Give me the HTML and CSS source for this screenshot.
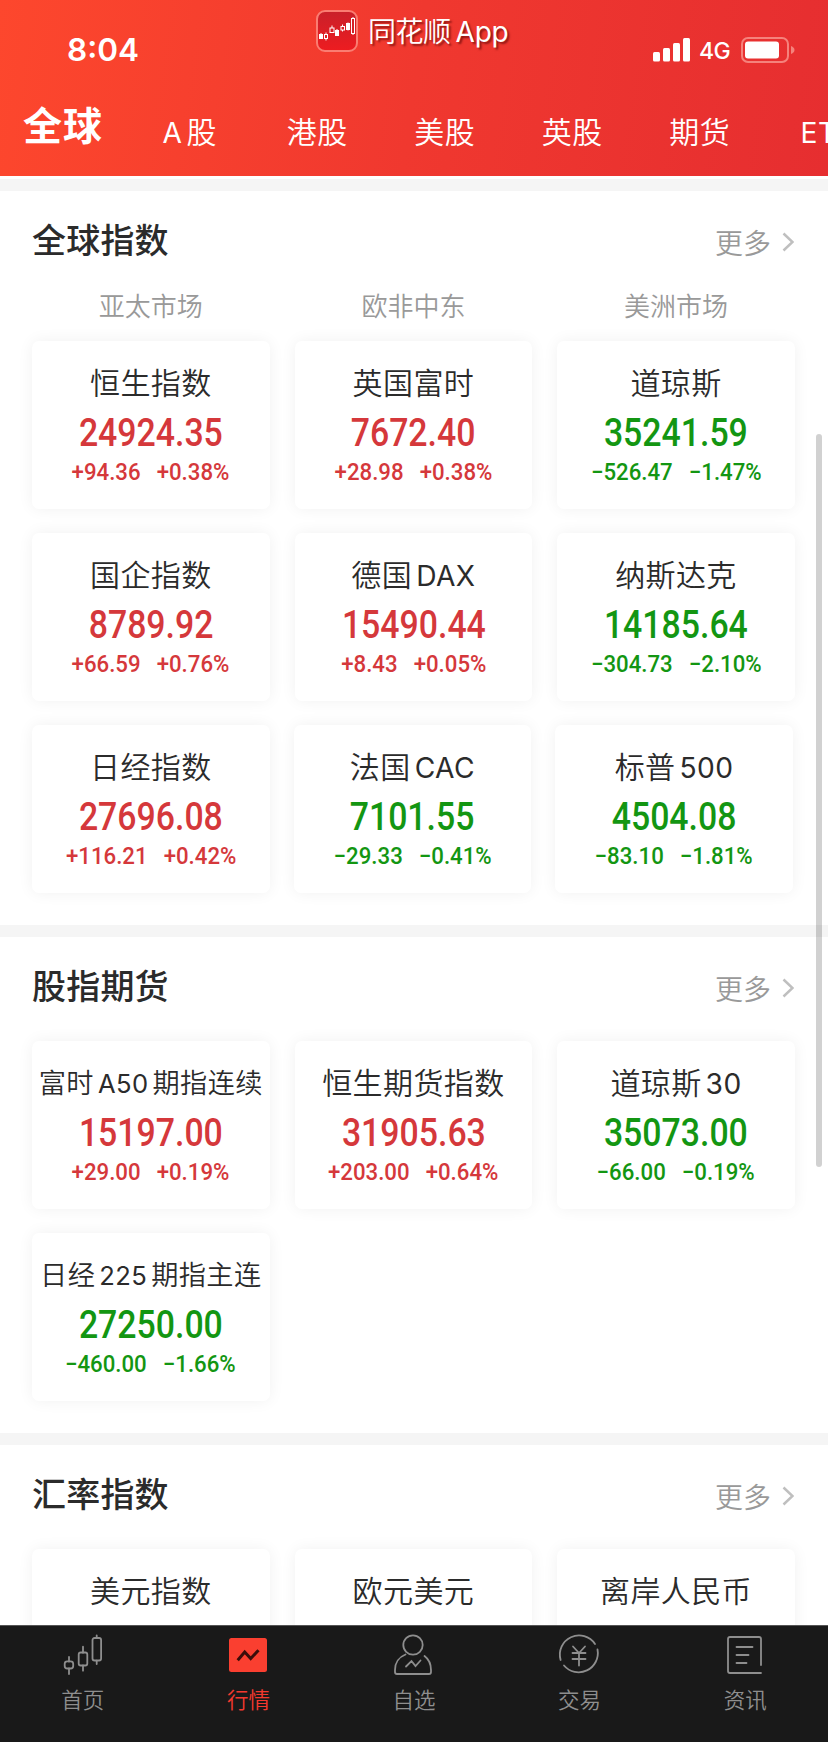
FILE: index.html
```html
<!DOCTYPE html>
<html lang="zh-CN">
<head>
<meta charset="utf-8">
<title>行情</title>
<link rel="stylesheet" href="styles.css">
</head>
<body>
<div class="screen">
  <header class="header">
    <div class="status">
      <span class="clock">8:04</span>
      <div class="brand">
        <svg class="logo" viewBox="0 0 42 42">
          <defs><linearGradient id="lg" x1="0" y1="0" x2="0" y2="1"><stop offset="0" stop-color="#c9202a"/><stop offset="1" stop-color="#ee1c20"/></linearGradient></defs>
          <rect x="1" y="1" width="40" height="40" rx="8" fill="url(#lg)" stroke="#fa7d72" stroke-width="2"/>
          <g stroke="#fff" stroke-width="1" fill="none">
            <path d="M5 23v6M10 22.500v8M16 15.500v7M21 19v7M26.500 14.500v7M32 12.500v8M37 7v18"/>
            <rect x="3.500" y="24.500" width="3" height="4" fill="#fff"/>
            <rect x="8.500" y="24.500" width="3" height="4" fill="#dc1e25"/>
            <rect x="14" y="18" width="4" height="4.500" fill="#dc1e25"/>
            <rect x="19.500" y="20.500" width="3" height="5" fill="#fff"/>
            <rect x="25" y="16.500" width="3.500" height="3.500" fill="#dc1e25"/>
            <rect x="30.500" y="13.500" width="3" height="6" fill="#fff"/>
            <rect x="35.500" y="8.500" width="3" height="15" fill="#d41f27"/>
          </g>
        </svg>
        <span class="brand-name">同花顺<span class="brand-app">App</span></span>
      </div>
      <div class="signals">
        <svg class="bars" viewBox="0 0 38 24"><g fill="#fff"><rect x="0" y="14" width="7" height="9.500" rx="1.500"/><rect x="10" y="10" width="7" height="13.500" rx="1.500"/><rect x="20" y="5" width="7" height="18.500" rx="1.500"/><rect x="30" y="0" width="7" height="23.500" rx="1.500"/></g></svg>
        <span class="net">4G</span>
        <svg class="battery" viewBox="0 0 54 26"><rect x="1" y="1" width="46" height="24" rx="6" fill="none" stroke="#f5827c" stroke-width="2"/><rect x="4" y="4.500" width="34" height="17" rx="3" fill="#fff"/><path d="M50 9q3.500 1.500 3.500 4t-3.500 4z" fill="#f5827c"/></svg>
      </div>
    </div>
    <nav class="tabs">
      <span class="tab tab-active">全球</span>
      <span class="tab"><span class="lat">A</span><i class="sp"></i>股</span>
      <span class="tab">港股</span>
      <span class="tab">美股</span>
      <span class="tab">英股</span>
      <span class="tab">期货</span>
      <span class="tab"><span class="lat">ETF</span></span>
    </nav>
  </header>

  <main class="content">
    <section class="section">
      <div class="head"><h2 class="title">全球指数</h2><span class="more">更多<svg class="chev" viewBox="0 0 12 20"><path d="M1.500 1.500L10.500 10L1.500 18.500"/></svg></span></div>
      <div class="regions"><span>亚太市场</span><span>欧非中东</span><span>美洲市场</span></div>
      <div class="rows">
        <div class="row">
          <div class="card up"><div class="name">恒生指数</div><div class="value">24924.35</div><div class="change"><span>+94.36</span><span>+0.38%</span></div></div>
          <div class="card up"><div class="name">英国富时</div><div class="value">7672.40</div><div class="change"><span>+28.98</span><span>+0.38%</span></div></div>
          <div class="card down"><div class="name">道琼斯</div><div class="value">35241.59</div><div class="change"><span>−526.47</span><span>−1.47%</span></div></div>
        </div>
        <div class="row">
          <div class="card up"><div class="name">国企指数</div><div class="value">8789.92</div><div class="change"><span>+66.59</span><span>+0.76%</span></div></div>
          <div class="card up"><div class="name">德国<i class="sp"></i><span class="lat">DAX</span></div><div class="value">15490.44</div><div class="change"><span>+8.43</span><span>+0.05%</span></div></div>
          <div class="card down"><div class="name">纳斯达克</div><div class="value">14185.64</div><div class="change"><span>−304.73</span><span>−2.10%</span></div></div>
        </div>
        <div class="row row-tight">
          <div class="card up"><div class="name">日经指数</div><div class="value">27696.08</div><div class="change"><span>+116.21</span><span>+0.42%</span></div></div>
          <div class="card down"><div class="name">法国<i class="sp"></i><span class="lat">CAC</span></div><div class="value">7101.55</div><div class="change"><span>−29.33</span><span>−0.41%</span></div></div>
          <div class="card down"><div class="name">标普<i class="sp"></i><span class="lat">500</span></div><div class="value">4504.08</div><div class="change"><span>−83.10</span><span>−1.81%</span></div></div>
        </div>
      </div>
    </section>

    <section class="section">
      <div class="head"><h2 class="title">股指期货</h2><span class="more">更多<svg class="chev" viewBox="0 0 12 20"><path d="M1.500 1.500L10.500 10L1.500 18.500"/></svg></span></div>
      <div class="rows">
        <div class="row">
          <div class="card up"><div class="name name-long">富时<i class="sp"></i><span class="lat">A50</span><i class="sp"></i>期指连续</div><div class="value">15197.00</div><div class="change"><span>+29.00</span><span>+0.19%</span></div></div>
          <div class="card up"><div class="name">恒生期货指数</div><div class="value">31905.63</div><div class="change"><span>+203.00</span><span>+0.64%</span></div></div>
          <div class="card down"><div class="name">道琼斯<i class="sp"></i><span class="lat">30</span></div><div class="value">35073.00</div><div class="change"><span>−66.00</span><span>−0.19%</span></div></div>
        </div>
        <div class="row">
          <div class="card down"><div class="name name-long">日经<i class="sp"></i><span class="lat">225</span><i class="sp"></i>期指主连</div><div class="value">27250.00</div><div class="change"><span>−460.00</span><span>−1.66%</span></div></div>
        </div>
      </div>
    </section>

    <section class="section">
      <div class="head"><h2 class="title">汇率指数</h2><span class="more">更多<svg class="chev" viewBox="0 0 12 20"><path d="M1.500 1.500L10.500 10L1.500 18.500"/></svg></span></div>
      <div class="rows">
        <div class="row">
          <div class="card"><div class="name">美元指数</div></div>
          <div class="card"><div class="name">欧元美元</div></div>
          <div class="card"><div class="name">离岸人民币</div></div>
        </div>
      </div>
    </section>
  </main>

  <nav class="tabbar">
    <div class="item">
      <svg class="icon" viewBox="0 0 48 44"><path d="M10 25v4.500M10 36.500V42M24 14.700v6M24 33.500v5.200M37.700 3.300V6M37.700 28.700V32"/><rect x="5.700" y="29.300" width="8.500" height="7.200" rx="2.500"/><rect x="19.700" y="20.500" width="8.600" height="13" rx="2"/><rect x="33.500" y="6" width="8.600" height="22.500" rx="2"/></svg>
      <span>首页</span>
    </div>
    <div class="item item-active">
      <svg class="icon" viewBox="0 0 48 44"><rect class="fill" x="5" y="6" width="38" height="34" rx="2.500"/><path class="dark" d="M13.700 28.300L20.700 20L26.700 26.500L34.500 18.300"/></svg>
      <span>行情</span>
    </div>
    <div class="item">
      <svg class="icon" viewBox="0 0 48 44"><circle cx="23" cy="13" r="9.700"/><path d="M15.500 22.500C9 25 5 31 5 38v2q0 2 2 2h32q2 0 2-2v-2c0-6-2.500-11-6.500-14"/><path d="M16 34.500l5.500-5.500l4 5l5-5.500"/></svg>
      <span>自选</span>
    </div>
    <div class="item">
      <svg class="icon" viewBox="0 0 48 44"><path d="M39 12A19.200 19.200 0 0 0 4.600 28M8 33.500A19.200 19.200 0 0 0 41.500 17.500"/><path d="M17 14.500l6 6.500l6-6.500M23 21V33.500M16.500 21h13M16.500 27h13"/></svg>
      <span>交易</span>
    </div>
    <div class="item">
      <svg class="icon" viewBox="0 0 48 44"><path d="M40 33V7q0-2-2-2H9Q7 5 7 7v32q0 2 2 2h31"/><path d="M15.500 15h16M15.500 23h12M15.500 31h10"/></svg>
      <span>资讯</span>
    </div>
  </nav>
  <div class="scrollbar"></div>
</div>
</body>
</html>
```
FILE: styles.css
```css
* { box-sizing: border-box; }
body {
  margin: 0;
  font-family: Inter, "Noto Sans CJK SC", sans-serif;
  color: #2b2b2b;
  background: #fff;
}
.screen {
  position: relative;
  width: 828px;
  height: 1742px;
  overflow: hidden;
  display: flex;
  flex-direction: column;
}
.header {
  flex: none;
  height: 176px;
  color: #fff;
  background: linear-gradient(98deg, #fd472d 0%, #f0382f 50%, #e62e30 100%);
}
.status {
  height: 88px;
  display: grid;
  grid-template-columns: 316px 337px 1fr;
}
.clock {
  padding: 30px 0 0 67px;
  font-size: 31.500px;
  line-height: 40px;
  font-weight: 600;
}
.brand {
  display: flex;
  gap: 10px;
  padding-top: 10px;
}
.logo { width: 42px; height: 42px; flex: none; }
.brand-name {
  font-size: 28px;
  line-height: 44px;
  letter-spacing: -0.500px;
  font-weight: 350;
  text-shadow: 2px 2px 2px rgba(80, 0, 0, 0.600);
}
.brand-app { margin-left: 5px; letter-spacing: -0.200px; font-weight: 400; }
.signals { display: flex; padding-top: 37px; }
.bars { width: 38px; height: 24px; margin-top: 1px; }
.net { width: 50px; padding-left: 8px; font-size: 23px; line-height: 28px; font-weight: 450; letter-spacing: -0.500px; }
.battery { width: 54px; height: 26px; }
.tabs { display: flex; height: 88px; }
.tab {
  flex: none;
  width: 127.500px;
  text-align: center;
  font-size: 30px;
  line-height: 89px;
  letter-spacing: 0.500px;
  font-weight: 350;
}
.tab-active {
  width: 126px;
  font-size: 39px;
  line-height: 76px;
  font-weight: 600;
  letter-spacing: 1px;
}
.sp { display: inline-block; width: 4px; }
.lat { font-size: 0.940em; line-height: 1; font-weight: 400; }

.content {
  flex: 1;
  min-height: 0;
  overflow: hidden;
  padding-top: 3px;
}
.section { border-top: 12px solid #f5f5f5; padding: 0 32px 32px; }
.head {
  height: 104px;
  display: flex;
  justify-content: space-between;
  padding-top: 24px;
}
.title { margin: 0; font-size: 34px; line-height: 52px; font-weight: 500; letter-spacing: 0.200px; }
.more { display: flex; align-items: center; height: 54px; color: #999; font-size: 28px; font-weight: 350; padding-right: 2px; }
.chev { width: 12px; height: 20px; margin-left: 11px; fill: none; stroke: #bfbfbf; stroke-width: 2.500; }
.regions {
  display: grid;
  grid-template-columns: repeat(3, 237.600px);
  column-gap: 25px;
  height: 70px;
  margin-top: -24px;
  text-align: center;
  color: #999;
  font-size: 26px;
  line-height: 72px;
  font-weight: 350;
}
.rows { display: flex; flex-direction: column; gap: 24px; }
.row { display: grid; grid-template-columns: repeat(3, 237.600px); column-gap: 25px; }
.row-tight { column-gap: 24px; }
.card {
  height: 168px;
  border-radius: 7px;
  background: #fff;
  box-shadow: 0 0 16px rgba(0, 0, 0, 0.060);
  display: flex;
  flex-direction: column;
  align-items: center;
  padding-top: 20px;
  white-space: nowrap;
}
.name { height: 44px; font-size: 30px; line-height: 44px; letter-spacing: 0.400px; font-weight: 350; }
.name-long { font-size: 27.200px; line-height: 46px; }
.value {
  margin-top: 6px;
  font-family: Roboto, sans-serif;
  font-size: 38px;
  line-height: 44px;
  font-weight: 500;
  transform: scaleX(0.890);
}
.change {
  display: flex;
  gap: 17px;
  margin-top: 3px;
  font-family: Roboto, sans-serif;
  font-size: 23.500px;
  line-height: 28px;
  font-weight: 500;
  transform: scaleX(0.945);
}
.up .value, .up .change { color: #d5383b; }
.down .value, .down .change { color: #139612; }

.tabbar {
  flex: none;
  height: 117px;
  display: grid;
  grid-template-columns: repeat(5, 1fr);
  background: #191919;
  border-top: 1px solid #555;
}
.item {
  display: flex;
  flex-direction: column;
  align-items: center;
  padding-top: 6px;
  color: #8e8e8e;
  font-size: 21.500px;
  line-height: 30px;
  font-weight: 350;
}
.item span { margin-top: 9px; }
.item-active { color: #f4392f; }
.icon { width: 48px; height: 44px; fill: none; stroke: #8e8e8e; stroke-width: 1.800; stroke-linecap: round; }
.icon .fill { fill: #fa3f30; stroke: none; }
.icon .dark { stroke: #3c0d0a; stroke-width: 3; stroke-linecap: butt; }
.scrollbar {
  position: absolute;
  left: 816px;
  top: 434px;
  width: 6px;
  height: 733px;
  border-radius: 3px;
  background: rgba(0, 0, 0, 0.180);
}
```
